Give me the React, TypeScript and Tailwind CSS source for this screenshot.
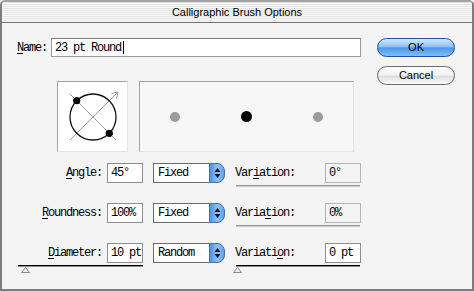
import React from 'react';

const MONO = "font-['Liberation_Mono',monospace] text-[12px] tracking-[-1.2px] text-black";
const SANS = "font-['Liberation_Sans',Arial,sans-serif] text-[11px] text-black";

const Key = ({ text, at }: { text: string; at: number }) => (
  <span className="whitespace-pre">
    {text.slice(0, at)}
    <span className="underline underline-offset-[2px]">{text[at]}</span>
    {text.slice(at + 1)}
  </span>
);

const Field = ({ value, disabled, className = '' }: { value: string; disabled?: boolean; className?: string }) => (
  <div
    className={`h-[20px] w-[36px] flex items-center pl-[3px] border ${
      disabled ? 'border-[#b4b4b4] bg-[#f4f4f4] text-[#a8a8a8]' : 'border-[#8e8e8e] bg-white'
    } ${className}`}
  >
    <span className={`${MONO} ${disabled ? 'text-[#a8a8a8]' : ''}`}>{value}</span>
  </div>
);

const Select = ({ value }: { value: string }) => (
  <div className="ml-[10px] h-[20px] w-[72px] flex items-stretch">
    <div className="flex-1 flex items-center pl-[4px] bg-white border border-r-0 border-[#6c6c6c]">
      <span className={MONO}>{value}</span>
    </div>
    <div className="w-[16px] rounded-r-[8px] border border-[#3f6fb8] bg-[linear-gradient(90deg,#4f94e6,#8cc4fb_55%,#5aa0ee)] flex items-center justify-center">
      <svg width="7" height="12" viewBox="0 0 7 12">
        <path d="M3.5 1 L6.5 5 L0.5 5 Z" fill="#111" />
        <path d="M3.5 11 L6.5 7 L0.5 7 Z" fill="#111" />
      </svg>
    </div>
  </div>
);

const Thumb = ({ className = '' }: { className?: string }) => (
  <svg width="9" height="6" viewBox="0 0 9 6" className={`block ${className}`}>
    <path d="M0.5 5.5 L4.5 0.5 L8.5 5.5 Z" fill="#ececec" stroke="#8a8a8a" strokeWidth="1" />
  </svg>
);

const Track = ({ active, width, thumb }: { active: boolean; width: string; thumb: string }) => (
  <div className={`flex flex-col ${width}`}>
    {active ? (
      <div className="h-[2px] border-t border-black bg-[#8c8c8c]" />
    ) : (
      <div className="h-[2px] border-t border-[#9c9c9c] bg-[#c8c8c8]" />
    )}
    {active && <Thumb className={thumb} />}
  </div>
);

type Row = {
  label: string;
  ul: number;
  value: string;
  mode: string;
  varUl: number;
  varValue: string;
  disabled: boolean;
  slider: boolean;
};

const ROWS: Row[] = [
  { label: 'Angle:', ul: 0, value: '45°', mode: 'Fixed', varUl: 3, varValue: '0°', disabled: true, slider: false },
  { label: 'Roundness:', ul: 0, value: '100%', mode: 'Fixed', varUl: 5, varValue: '0%', disabled: true, slider: false },
  { label: 'Diameter:', ul: 0, value: '10 pt', mode: 'Random', varUl: 7, varValue: '0 pt', disabled: false, slider: true },
];

const ParamRow = ({ row }: { row: Row }) => (
  <div className="flex flex-col h-[30px]">
    <div className="flex items-center h-[20px]">
      <div className={`w-[103px] text-right pr-[3px] ${MONO}`}>
        <Key text={row.label} at={row.ul} />
      </div>
      <Field value={row.value} className="ml-[2px]" />
      <Select value={row.mode} />
      <div className="ml-[10px] w-[126px] flex items-center justify-between">
        <span className={MONO}>
          <Key text="Variation:" at={row.varUl} />
        </span>
        <Field value={row.varValue} disabled={row.disabled} />
      </div>
    </div>
    <div className="flex mt-[2px]">
      <div className="w-[234px] flex">
        {row.slider && <Track active width="ml-[16px] w-[125px]" thumb="ml-[3px]" />}
      </div>
      <Track active={!row.disabled} width="w-[124px]" thumb="-ml-[3px]" />
    </div>
  </div>
);

const AngleGlyph = () => (
  <svg width="69" height="69" viewBox="0 0 69 69" className="block">
    <line x1="12" y1="12" x2="58" y2="58" stroke="#9a9a9a" strokeWidth="1" />
    <line x1="12" y1="58" x2="60" y2="10" stroke="#9a9a9a" strokeWidth="1" />
    <path d="M53.5 11.5 L60 10 L58.5 16.5" fill="none" stroke="#9a9a9a" strokeWidth="1" />
    <circle cx="35" cy="35" r="23" fill="none" stroke="#111" strokeWidth="1.3" />
    <circle cx="18.7" cy="18.7" r="3.6" fill="#000" />
    <circle cx="51.3" cy="51.3" r="3.6" fill="#000" />
  </svg>
);

export default function App() {
  return (
    <div className="w-[474px] h-[291px] flex flex-col bg-[#f4f4f4] border-2 border-[#7c7c7c] border-t-[#a4a4a4] rounded-t-[5px] overflow-hidden">
      {/* title bar */}
      <div className="h-[21px] shrink-0 flex items-center justify-center border-b border-[#6e6e6e] bg-[repeating-linear-gradient(180deg,#e4e4e4_0px,#e4e4e4_1px,#f9f9f9_1px,#f9f9f9_2px)]">
        <span className={SANS}>Calligraphic Brush Options</span>
      </div>

      <div className="flex flex-col pt-[15px]">
        <div className="flex">
          <div className="flex flex-col">
            <div className="flex items-center h-[19px] pl-[15px]">
              <span className={MONO}>
                <Key text="Name:" at={0} />
              </span>
              <div className="ml-[4px] w-[310px] h-[19px] flex items-center pl-[3px] bg-white border border-[#9a9a9a] border-t-[#7e7e7e]">
                <span className={`${MONO} whitespace-pre`}>23 pt Round</span>
                <span className="w-[1px] h-[13px] bg-black ml-[2px]" />
              </div>
            </div>
            <div className="flex gap-[11px] mt-[24px] pl-[55px]">
              <div className="w-[71px] h-[71px] bg-white border border-[#a2a2a2] border-r-[#e4e4e4] border-b-[#e4e4e4]">
                <AngleGlyph />
              </div>
              <div className="w-[215px] h-[71px] bg-[#f7f7f7] border border-[#a2a2a2] border-r-[#e4e4e4] border-b-[#e4e4e4] flex items-center justify-around">
                <span className="w-[10px] h-[10px] rounded-full bg-[#9c9c9c]" />
                <span className="w-[11px] h-[11px] rounded-full bg-black" />
                <span className="w-[10px] h-[10px] rounded-full bg-[#9c9c9c]" />
              </div>
            </div>
          </div>

          <div className="ml-[16px] w-[78px] flex flex-col gap-[9px]">
            <button className={`h-[19px] rounded-full border border-[#1f4f9e] bg-[linear-gradient(180deg,#d3e9ff_0%,#8cc2f6_45%,#4d97e6_52%,#7cc0fb_100%)] ${SANS}`}>
              OK
            </button>
            <button className={`h-[19px] rounded-full border border-[#6a6a6a] bg-[linear-gradient(180deg,#ffffff_0%,#f2f2f2_45%,#dedede_55%,#fbfbfb_100%)] ${SANS}`}>
              Cancel
            </button>
          </div>
        </div>

        <div className="flex flex-col gap-[10px] mt-[11px]">
          {ROWS.map(r => (
            <ParamRow key={r.label} row={r} />
          ))}
        </div>
      </div>
    </div>
  );
}
